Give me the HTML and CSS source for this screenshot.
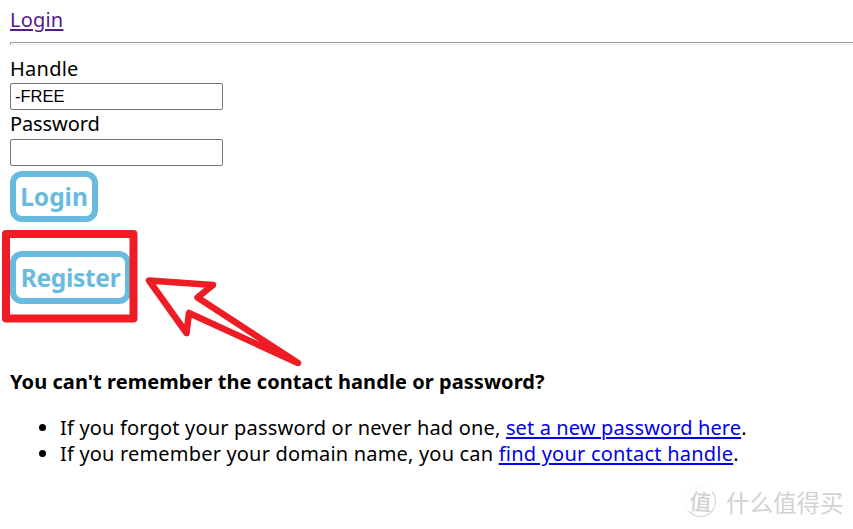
FILE: index.html
```html
<!DOCTYPE html>
<html lang="en">
<head>
<meta charset="utf-8">
<title>Login</title>
<link rel="stylesheet" href="styles.css">
</head>
<body>
<nav><a class="visited" href="#">Login</a></nav>
<hr>
<form>
  <label for="handle">Handle</label>
  <input id="handle" type="text" value="-FREE">
  <label class="tight" for="password">Password</label>
  <input id="password" type="password">
  <button class="login" type="button">Login</button>
  <button class="register" type="button">Register</button>
</form>
<section>
  <h2>You can't remember the contact handle or password?</h2>
  <ul>
    <li><span class="forgot">If you forgot your password or never had one, </span><a class="new-password" href="#">set a new password here</a>.</li>
    <li><span class="domain">If you remember your domain name, you can </span><a class="find" href="#">find your contact handle</a>.</li>
  </ul>
</section>
<svg class="annotation" width="310" height="150" viewBox="0 225 310 150" fill="none" stroke="#ee1c25" stroke-width="8" stroke-linejoin="round" aria-hidden="true">
  <rect x="6" y="234" width="127.500" height="84.500"/>
  <path stroke-width="6.500" d="M149 280.500L213 285L197.500 297.500L298 363L189 313L186.500 333Z"/>
</svg>
<div class="watermark"><span class="badge">值</span><span class="brand">什么值得买</span></div>
</body>
</html>
```
FILE: styles.css
```css
body {
  margin: 0;
  height: 529px;
  padding: 7px 0 0 10px;
  box-sizing: border-box;
  overflow: hidden;
  position: relative;
  background: #fff;
  color: #000;
  font: 20px/26px "Noto Sans", sans-serif;
}
nav { height: 26px; letter-spacing: 0.2px; }
a { color: #0000ee; text-decoration-thickness: 2px; text-underline-offset: 2px; }
a.visited { color: #551a8b; }
hr {
  margin: 9px 0 12px;
  height: 3px;
  box-sizing: border-box;
  border: 1px solid #999;
  border-bottom-color: #eee;
  border-right: 0;
}
form { display: flex; flex-direction: column; align-items: flex-start; }
label { height: 26px; line-height: 24px; letter-spacing: 0.25px; }
label.tight { line-height: 22px; letter-spacing: -0.1px; }
input {
  box-sizing: border-box;
  width: 213px;
  height: 27px;
  margin: 0 0 3px;
  padding: 1px 4px;
  border: 1px solid #767676;
  border-radius: 2px;
  font: 16.500px "Liberation Sans", sans-serif;
}
button {
  box-sizing: border-box;
  padding: 0;
  border: 6px solid #68bbde;
  border-radius: 12px;
  background: #fff;
  color: #68bbde;
  font: bold 24.500px/36px "Noto Sans", sans-serif;
}
.login { width: 88px; height: 51px; margin-top: 2px; }
.register { width: 121px; height: 53px; margin-top: 29px; letter-spacing: -0.3px; }
h2 { margin: 65px 0 20px; font-size: 20px; line-height: 26px; letter-spacing: 0.06px; }
h2, li { white-space: nowrap; }
ul { margin: 0; padding-left: 50px; }
.forgot, .domain { white-space: pre; letter-spacing: 0.18px; }
.new-password { letter-spacing: 0.12px; }
.find { letter-spacing: 0.22px; }
.annotation { position: absolute; left: 0; top: 225px; }
.watermark {
  position: absolute;
  left: 685px;
  top: 486px;
  display: flex;
  align-items: center;
  gap: 10px;
  color: #d2d2d2;
  font-family: "Noto Sans CJK SC", sans-serif;
}
.badge {
  box-sizing: border-box;
  width: 31px;
  height: 31px;
  border: 1px solid #f8f8f8;
  border-right-color: #cfcfcf;
  border-bottom-color: #cfcfcf;
  border-radius: 50%;
  font-size: 22px;
  font-weight: 500;
  line-height: 27px;
  text-align: center;
  transform: rotate(4deg);
}
.brand { font-size: 23.500px; }
```
